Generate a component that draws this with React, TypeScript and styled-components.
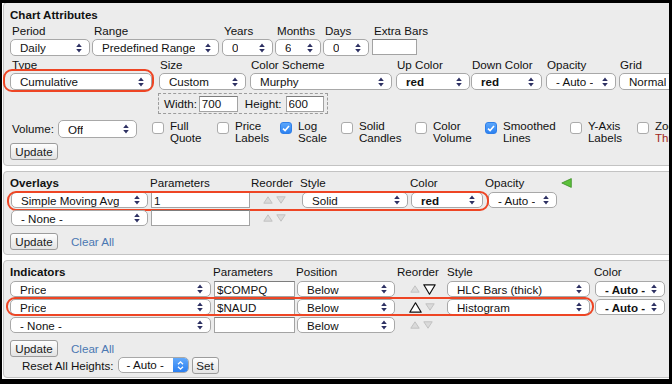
import React from "react";
import styled, { createGlobalStyle, css } from "styled-components";

const GlobalStyle = createGlobalStyle`
  html, body {
    margin: 0;
    padding: 0;
    background: #000;
  }
  body {
    font-family: "Liberation Sans", Arial, Helvetica, sans-serif;
    font-size: 11.6px;
    color: #111;
  }
`;

const Frame = styled.div`
  width: 672px;
  height: 384px;
  box-sizing: border-box;
  border-style: solid;
  border-color: #000;
  border-width: 3px 3px 5px 2px;
  background: #fff;
  overflow: hidden;
  padding-left: 1px;
  display: flex;
  flex-direction: column;
  gap: 5px;
`;

const Panel = styled.div<{ $first?: boolean; $pt?: number }>`
  width: 730px;
  flex-shrink: 0;
  box-sizing: border-box;
  background: #ececec;
  border: 1px solid #c3c3c3;
  border-radius: 4px;
  padding: ${(p) => p.$pt ?? 4}px 0 4px 6px;
  ${(p) =>
    p.$first &&
    css`
      margin-top: -1px;
      padding-top: 5px;
      padding-bottom: 5px;
    `}
`;

const PanelTitle = styled.div`
  font-weight: 700;
  line-height: 14px;
  height: 14px;
  white-space: nowrap;
`;

const Row = styled.div<{ $mt?: number }>`
  display: flex;
  align-items: flex-start;
  margin-top: ${(p) => p.$mt ?? 0}px;
`;

const Field = styled.div<{ $w: number }>`
  width: ${(p) => p.$w}px;
  flex-shrink: 0;
  display: flex;
  flex-direction: column;
  gap: 1px;
`;

const Label = styled.div<{ $pl?: number }>`
  line-height: 14px;
  height: 14px;
  padding-left: ${(p) => p.$pl ?? 2}px;
  white-space: nowrap;
`;

const VolumeLabel = styled(Label)`
  height: 18px;
  line-height: 18px;
  margin-right: 4px;
`;

const SelectBox = styled.div<{ $w: number; $h: number; $bold?: boolean; $ml?: number }>`
  box-sizing: border-box;
  width: ${(p) => p.$w}px;
  height: ${(p) => p.$h}px;
  margin-left: ${(p) => p.$ml ?? 0}px;
  display: flex;
  align-items: center;
  justify-content: space-between;
  padding: 0 7px 0 9px;
  background: #fff;
  border: 1px solid #a8a8a8;
  border-radius: 5px;
  font-weight: ${(p) => (p.$bold ? 700 : 400)};
  white-space: nowrap;
  overflow: hidden;
  flex-shrink: 0;
`;

const SelectText = styled.span`
  overflow: hidden;
`;

const UpDown = () => (
  <svg width="6" height="10" viewBox="0 0 6 10">
    <path d="M3 0.6 L5.8 4 H0.2Z M3 9.4 L5.8 6 H0.2Z" fill="#2e3163" />
  </svg>
);

type SelectProps = {
  w: number;
  h?: number;
  bold?: boolean;
  ml?: number;
  children: React.ReactNode;
};

const Select = ({ w, h = 17, bold, ml, children }: SelectProps) => (
  <SelectBox $w={w} $h={h} $bold={bold} $ml={ml}>
    <SelectText>{children}</SelectText>
    <UpDown />
  </SelectBox>
);

const TextInput = styled.input<{ $w: number; $h?: number; $ml?: number }>`
  box-sizing: border-box;
  width: ${(p) => p.$w}px;
  height: ${(p) => p.$h ?? 16}px;
  margin: 0 0 0 ${(p) => p.$ml ?? 0}px;
  padding: 0 2px;
  border: 1px solid #a3a3a3;
  border-top-color: #7d7d7d;
  background: #fff;
  font-family: inherit;
  font-size: 11.6px;
  color: #111;
  outline: none;
`;

const SizeBox = styled.div`
  box-sizing: border-box;
  margin-left: 148px;
  width: 170px;
  height: 21px;
  border: 1px dashed #9c9c9c;
  display: flex;
  align-items: center;
  padding-left: 5px;
`;

const InlineLabel = styled.span<{ $mr: number; $ml?: number }>`
  margin-right: ${(p) => p.$mr}px;
  margin-left: ${(p) => p.$ml ?? 0}px;
  white-space: nowrap;
`;

const RingWrap = styled.div`
  position: relative;
`;

const Ring = styled.div<{ $top: number; $left: number; $width: number; $height: number }>`
  position: absolute;
  top: ${(p) => p.$top}px;
  left: ${(p) => p.$left}px;
  width: ${(p) => p.$width}px;
  height: ${(p) => p.$height}px;
  box-sizing: border-box;
  border: 2.6px solid #ee4524;
  border-radius: 9px;
  pointer-events: none;
`;

const CheckGroup = styled.div`
  display: flex;
  margin-left: 15px;
`;

const CheckItem = styled.div<{ $w: number }>`
  width: ${(p) => p.$w}px;
  flex-shrink: 0;
  display: flex;
  align-items: flex-start;
  gap: 6px;
`;

const Box = styled.span<{ $on?: boolean }>`
  box-sizing: border-box;
  width: 12px;
  height: 12px;
  margin-top: 2px;
  border-radius: 3px;
  flex-shrink: 0;
  display: flex;
  align-items: center;
  justify-content: center;
  border: 1px solid #ababab;
  background: #fff;
  ${(p) =>
    p.$on &&
    css`
      border-color: #2f7fe8;
      background: linear-gradient(#5aa6fb, #2d82f1);
    `}
`;

const CheckText = styled.div<{ $red?: boolean }>`
  line-height: 11.5px;
  margin-top: 0;
  white-space: nowrap;
  span {
    display: block;
  }
  span + span {
    color: ${(p) => (p.$red ? "#a1281b" : "inherit")};
  }
`;

const Tick = () => (
  <svg width="8" height="7" viewBox="0 0 8 7">
    <path d="M1 3.6 L3.1 5.6 L7 1" fill="none" stroke="#fff" strokeWidth="1.6" />
  </svg>
);

type CheckProps = { w: number; on?: boolean; red?: boolean; a: string; b: string };

const Check = ({ w, on, red, a, b }: CheckProps) => (
  <CheckItem $w={w}>
    <Box $on={on}>{on && <Tick />}</Box>
    <CheckText $red={red}>
      <span>{a}</span>
      <span>{b}</span>
    </CheckText>
  </CheckItem>
);

const Button = styled.button<{ $w: number }>`
  box-sizing: border-box;
  width: ${(p) => p.$w}px;
  height: 17px;
  margin: 0;
  padding: 0;
  border: 1px solid #9c9c9c;
  border-radius: 3px;
  background: linear-gradient(#fefefe, #e3e3e3);
  font-family: inherit;
  font-size: 11.6px;
  color: #1a1a1a;
  line-height: 15px;
  flex-shrink: 0;
`;

const ActionRow = styled.div<{ $mt: number }>`
  display: flex;
  align-items: center;
  gap: 13px;
  margin-top: ${(p) => p.$mt}px;
`;

const LinkText = styled.span`
  color: #4a78b2;
`;

const TableRow = styled.div<{ $cols: string }>`
  position: relative;
  display: grid;
  grid-template-columns: ${(p) => p.$cols};
  height: 16px;
  align-items: center;
  margin-top: 2px;
  &:first-child {
    margin-top: 0;
    height: 14px;
    line-height: 14px;
  }
`;

const ColLabel = styled.div`
  white-space: nowrap;
`;

const Reorder = styled.div<{ $pl?: number }>`
  display: flex;
  align-items: center;
  gap: 3px;
  padding-left: ${(p) => p.$pl ?? 12}px;
`;

const Tri = ({ dir, on }: { dir: "up" | "down"; on?: boolean }) => {
  const w = on ? 13 : 10;
  const h = on ? 11 : 8;
  const d =
    dir === "up"
      ? `M${w / 2} 0.8 L${w - 0.8} ${h - 0.8} H0.8Z`
      : `M0.8 0.8 H${w - 0.8} L${w / 2} ${h - 0.8}Z`;
  return (
    <svg width={w} height={h} viewBox={`0 0 ${w} ${h}`}>
      <path
        d={d}
        fill={on ? "#fff" : "#dadada"}
        stroke={on ? "#111" : "#c2c2c2"}
        strokeWidth={on ? 1.2 : 1}
        strokeLinejoin="round"
      />
    </svg>
  );
};

const GreenArrow = styled.div`
  padding-left: 2px;
  display: flex;
  align-items: center;
`;

const ResetRow = styled.div`
  display: flex;
  align-items: center;
  height: 16px;
  padding-left: 12px;
`;

const ActiveSelect = styled.div`
  box-sizing: border-box;
  width: 71px;
  height: 16px;
  margin-left: 4px;
  margin-right: 3px;
  display: flex;
  border: 1px solid #a8a8a8;
  border-radius: 5px;
  background: #fff;
  overflow: hidden;
`;

const ActiveText = styled.span`
  flex: 1;
  padding-left: 8px;
  line-height: 14px;
  white-space: nowrap;
`;

const Stepper = styled.span`
  width: 15px;
  display: flex;
  align-items: center;
  justify-content: center;
  background: linear-gradient(#62a9fb, #2b7ff0);
`;

const overlayCols = "140px 101px 49px 110px 75px 74px auto";
const indicatorCols = "203px 83px 101px 50px 147px 74px";

export default function App() {
  return (
    <>
      <GlobalStyle />
      <Frame>
        <Panel $first>
          <PanelTitle>Chart Attributes</PanelTitle>
          <Row $mt={2}>
            <Field $w={82}>
              <Label>Period</Label>
              <Select w={80}>Daily</Select>
            </Field>
            <Field $w={130}>
              <Label>Range</Label>
              <Select w={127}>Predefined Range</Select>
            </Field>
            <Field $w={53}>
              <Label>Years</Label>
              <Select w={51}>0</Select>
            </Field>
            <Field $w={48}>
              <Label>Months</Label>
              <Select w={46}>6</Select>
            </Field>
            <Field $w={49}>
              <Label>Days</Label>
              <Select w={46}>0</Select>
            </Field>
            <Field $w={60}>
              <Label>Extra Bars</Label>
              <TextInput $w={45} readOnly value="" />
            </Field>
          </Row>
          <Row $mt={2}>
            <Field $w={149}>
              <Label>Type</Label>
              <RingWrap>
                <Select w={142}>Cumulative</Select>
                <Ring $top={-4} $left={-7} $width={151} $height={23} />
              </RingWrap>
            </Field>
            <Field $w={91}>
              <Label $pl={1}>Size</Label>
              <Select w={87}>Custom</Select>
            </Field>
            <Field $w={146}>
              <Label $pl={1}>Color Scheme</Label>
              <Select w={142}>Murphy</Select>
            </Field>
            <Field $w={75}>
              <Label $pl={1}>Up Color</Label>
              <Select w={74} bold>
                red
              </Select>
            </Field>
            <Field $w={75}>
              <Label $pl={1}>Down Color</Label>
              <Select w={71} bold>
                red
              </Select>
            </Field>
            <Field $w={73}>
              <Label $pl={1}>Opacity</Label>
              <Select w={70}>- Auto -</Select>
            </Field>
            <Field $w={80}>
              <Label $pl={1}>Grid</Label>
              <Select w={76}>Normal</Select>
            </Field>
          </Row>
          <Row $mt={3}>
            <SizeBox>
              <InlineLabel $mr={2}>Width:</InlineLabel>
              <TextInput $w={39} readOnly value="700" />
              <InlineLabel $mr={4} $ml={7}>
                Height:
              </InlineLabel>
              <TextInput $w={38} readOnly value="600" />
            </SizeBox>
          </Row>
          <Row $mt={6}>
            <VolumeLabel>Volume:</VolumeLabel>
            <Select w={79} h={18}>
              Off
            </Select>
            <CheckGroup>
              <Check w={65} a="Full" b="Quote" />
              <Check w={63} a="Price" b="Labels" />
              <Check w={61} on a="Log" b="Scale" />
              <Check w={74} a="Solid" b="Candles" />
              <Check w={70} a="Color" b="Volume" />
              <Check w={85} on a="Smoothed" b="Lines" />
              <Check w={67} a="Y-Axis" b="Labels" />
              <Check w={70} red a="Zoom" b="Thru" />
            </CheckGroup>
          </Row>
          <ActionRow $mt={0}>
            <Button $w={48}>Update</Button>
          </ActionRow>
        </Panel>

        <Panel>
          <div>
            <TableRow $cols={overlayCols}>
              <PanelTitle>Overlays</PanelTitle>
              <ColLabel>Parameters</ColLabel>
              <ColLabel>Reorder</ColLabel>
              <ColLabel>Style</ColLabel>
              <ColLabel>Color</ColLabel>
              <ColLabel>Opacity</ColLabel>
              <GreenArrow>
                <svg width="11" height="10" viewBox="0 0 11 10">
                  <path d="M10.3 0.6 V9.4 L0.8 5Z" fill="#5cc13b" stroke="#3c8e27" strokeWidth="0.8" />
                </svg>
              </GreenArrow>
            </TableRow>
            <TableRow $cols={overlayCols}>
              <Select w={137} h={16} ml={1}>
                Simple Moving Avg
              </Select>
              <TextInput $w={99} $ml={1} readOnly value="1" />
              <Reorder>
                <Tri dir="up" />
                <Tri dir="down" />
              </Reorder>
              <Select w={106} h={16} ml={2}>
                Solid
              </Select>
              <Select w={72} h={16} ml={1} bold>
                red
              </Select>
              <Select w={69} h={16} ml={3}>
                - Auto -
              </Select>
              <Ring $top={-1} $left={-3} $width={482} $height={20} />
            </TableRow>
            <TableRow $cols={overlayCols}>
              <Select w={137} h={16} ml={1}>
                - None -
              </Select>
              <TextInput $w={99} $ml={1} readOnly value="" />
              <Reorder>
                <Tri dir="up" />
                <Tri dir="down" />
              </Reorder>
            </TableRow>
          </div>
          <ActionRow $mt={7}>
            <Button $w={48}>Update</Button>
            <LinkText>Clear All</LinkText>
          </ActionRow>
        </Panel>

        <Panel>
          <div>
            <TableRow $cols={indicatorCols}>
              <PanelTitle>Indicators</PanelTitle>
              <ColLabel>Parameters</ColLabel>
              <ColLabel>Position</ColLabel>
              <ColLabel>Reorder</ColLabel>
              <ColLabel>Style</ColLabel>
              <ColLabel>Color</ColLabel>
            </TableRow>
            <TableRow $cols={indicatorCols}>
              <Select w={201} h={16}>
                Price
              </Select>
              <TextInput $w={81} $ml={1} readOnly value="$COMPQ" />
              <Select w={98} h={16} ml={1}>
                Below
              </Select>
              <Reorder $pl={13}>
                <Tri dir="up" />
                <Tri dir="down" on />
              </Reorder>
              <Select w={143} h={16}>
                HLC Bars (thick)
              </Select>
              <Select w={70} h={16} ml={1} bold>
                - Auto -
              </Select>
            </TableRow>
            <TableRow $cols={indicatorCols}>
              <Select w={201} h={16}>
                Price
              </Select>
              <TextInput $w={81} $ml={1} readOnly value="$NAUD" />
              <Select w={98} h={16} ml={1}>
                Below
              </Select>
              <Reorder $pl={12}>
                <Tri dir="up" on />
                <Tri dir="down" />
              </Reorder>
              <Select w={143} h={16}>
                Histogram
              </Select>
              <Select w={70} h={16} ml={1} bold>
                - Auto -
              </Select>
              <Ring $top={-2} $left={-4} $width={588} $height={19} />
            </TableRow>
            <TableRow $cols={indicatorCols}>
              <Select w={201} h={16}>
                - None -
              </Select>
              <TextInput $w={81} $ml={1} readOnly value="" />
              <Select w={98} h={16} ml={1}>
                Below
              </Select>
              <Reorder $pl={13}>
                <Tri dir="up" />
                <Tri dir="down" />
              </Reorder>
            </TableRow>
          </div>
          <ActionRow $mt={7}>
            <Button $w={48}>Update</Button>
            <LinkText>Clear All</LinkText>
          </ActionRow>
          <ResetRow>
            <span>Reset All Heights:</span>
            <ActiveSelect>
              <ActiveText>- Auto -</ActiveText>
              <Stepper>
                <svg width="7" height="11" viewBox="0 0 7 11">
                  <path d="M1 4.3 L3.5 1.8 L6 4.3 M1 6.7 L3.5 9.2 L6 6.7" fill="none" stroke="#fff" strokeWidth="1.3" />
                </svg>
              </Stepper>
            </ActiveSelect>
            <Button $w={27}>Set</Button>
          </ResetRow>
        </Panel>
      </Frame>
    </>
  );
}
